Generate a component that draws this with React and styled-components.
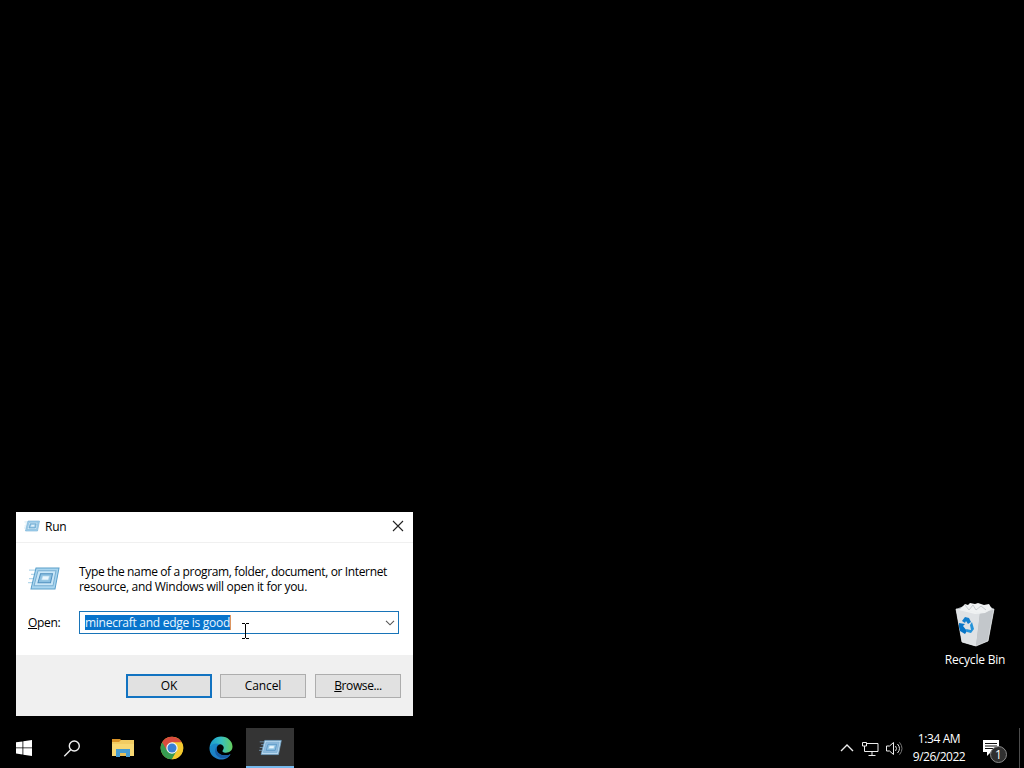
import React from "react";
import styled, { createGlobalStyle } from "styled-components";

const Global = createGlobalStyle`
  * { box-sizing: border-box; }
  body { margin: 0; background: #000; overflow: hidden; }
`;

const Desktop = styled.main`
  position: relative;
  width: 1024px;
  height: 768px;
  display: flex;
  flex-direction: column;
  justify-content: flex-end;
  background: #000;
  font-family: "Open Sans", "Noto Sans", sans-serif;
  font-size: 12px;
  line-height: 15px;
  color: #000;
  cursor: default;
  svg { display: block; flex: none; }
`;

const Label = styled.span`
  display: block;
  white-space: pre;
  letter-spacing: ${(p) => p.$spacing || 0}px;
`;

const Shortcut = styled.div`
  position: absolute;
  left: 937px;
  top: 600px;
  width: 76px;
  display: flex;
  flex-direction: column;
  align-items: center;
  gap: 4px;
  color: #fff;
`;

const Dialog = styled.section`
  position: absolute;
  left: 16px;
  top: 512px;
  width: 397px;
  height: 204px;
  display: flex;
  flex-direction: column;
  background: #fff;
`;

const TitleBar = styled.header`
  height: 31px;
  padding: 0 9px 2px 8px;
  display: flex;
  align-items: center;
  gap: 5px;
  border-bottom: 1px solid #f0f0f0;
`;

const CloseButton = styled.button`
  margin-left: auto;
  padding: 0;
  border: 0;
  background: none;
`;

const Body = styled.div`
  height: 112px;
  padding: 21px 14px 0 12px;
  display: flex;
  flex-direction: column;
  gap: 17px;
`;

const Message = styled.div`
  display: flex;
  align-items: flex-start;
  gap: 18px;
  height: 30px;
`;

const MessageIcon = styled.div`
  width: 33px;
  padding-top: 2px;
`;

const Field = styled.div`
  display: flex;
  align-items: center;
  height: 23px;
`;

const FieldName = styled.label`
  width: 51px;
  letter-spacing: -0.3px;
`;

const Combo = styled.div`
  flex: 1;
  height: 23px;
  padding: 0 3px 0 5px;
  display: flex;
  align-items: center;
  justify-content: space-between;
  border: 1px solid #1874b8;
`;

const Selection = styled.span`
  height: 15px;
  display: block;
  color: #e8f6ff;
  background: #0874cc;
  border-right: 1px solid #dc9560;
  letter-spacing: ${(p) => p.$spacing}px;
  white-space: pre;
`;

const Footer = styled.footer`
  height: 61px;
  padding: 19px 12px 18px;
  display: flex;
  justify-content: flex-end;
  background: #f0f0f0;
`;

const Button = styled.button`
  width: 86px;
  height: 24px;
  margin-left: ${(p) => p.$gap || 0}px;
  padding: 0 0 1px;
  display: flex;
  align-items: center;
  justify-content: center;
  font: inherit;
  letter-spacing: ${(p) => p.$spacing || 0}px;
  color: #000;
  background: #e1e1e1;
  border: ${(p) => (p.$primary ? "2px solid #1273c1" : "1px solid #adadad")};
`;

const Pointer = styled.div`
  position: absolute;
  left: 241px;
  top: 623px;
`;

const Taskbar = styled.nav`
  height: 40px;
  display: flex;
  justify-content: space-between;
  background: #000;
`;

const Group = styled.div`
  display: flex;
  align-items: center;
`;

const Task = styled.button`
  width: ${(p) => p.$width || 49}px;
  height: 40px;
  padding: 0 0 0 ${(p) => p.$inset || 0}px;
  display: flex;
  align-items: center;
  justify-content: center;
  border: 0;
  border-bottom: ${(p) => (p.$active ? "2px solid #76b9ed" : "0")};
  background: ${(p) => (p.$active ? "#343434" : "none")};
`;

const Tray = styled(Group)`
  gap: 7px;
  color: #fff;
`;

const Clock = styled.div`
  width: 54px;
  margin-left: 2px;
  display: flex;
  flex-direction: column;
  align-items: center;
  line-height: 18px;
  padding-bottom: 1px;
`;

const Notice = styled.div`
  position: relative;
  width: 34px;
  height: 40px;
  padding: 12px 0 0 10px;
`;

const Badge = styled.span`
  position: absolute;
  left: 17px;
  top: 18px;
  width: 17px;
  height: 17px;
  border: 1px solid #8a8a8a;
  border-radius: 50%;
  background: #303030;
  font-size: 12px;
  line-height: 15px;
  text-align: center;
`;

const ShowDesktop = styled.div`
  width: 5px;
  height: 40px;
  margin-left: 5px;
  border-left: 1px solid #4d4d4d;
`;

function RunIcon({ width, height, dark }) {
  return (
    <svg width={width} height={height} viewBox="0 0 32 24" preserveAspectRatio="none">
      <path d="M1 4h8M3 8h5M1 12h6M0 16h5M3 20h2" stroke={dark ? "#7295b0" : "#b4d8eb"} strokeWidth="1.2" />
      <path d="M8 2h23l-4 20H3z" fill={dark ? "#b9d8ef" : "#a9d5ef"} stroke={dark ? "#6fa3c8" : "#5a9fca"} />
      <path d="M10 4.5h18L25 19H6z" fill={dark ? "#8fb9dc" : "#c9e6f7"} stroke="#78afd2" />
      <path d="M12.5 7.5h12l-2 8.5H10z" fill="#8dc1e2" stroke="#4f90bf" />
      <path d="M14.5 9.5h7l-1 4h-7z" fill="#e9f6fd" stroke="#a0cce7" strokeWidth=".7" />
    </svg>
  );
}

function BinIcon() {
  return (
    <svg width="40" height="48" viewBox="0 0 40 48">
      <path d="M1 9l8-3 23-1 7 4-6 32-13 5-13-4z" fill="#b5bbc0" />
      <path d="M1 9l24 4-4 33-14-4z" fill="#dfe2e5" />
      <path d="M25 13l14-4-6 32-12 5z" fill="#c3c7cb" />
      <path d="M4 10l6-6 3 1 2-2 5 1 3-1 6 2 5-1 3 5-7 4-10 1z" fill="#f0f2f3" />
      <path d="M10 5l4 5 4-5 3 5 5-4 5 4" fill="none" stroke="#bcc2c6" strokeWidth=".8" />
      <path d="M1 9l24 4 14-4M1 9l6 33 14 4 12-5 6-32" fill="none" stroke="#eceff1" strokeWidth=".7" />
      <path d="M7 21l3-4 4 1 2 4-3 2-2-3-1 2z" fill="#147fce" />
      <path d="M17 22l2 7-3 4-4-1-1-3 5 1-1-5z" fill="#2393da" />
      <path d="M4 23l6 1-2 2 4 5-2 3-5-3-1-4z" fill="#0875c7" />
    </svg>
  );
}

function ChromeIcon() {
  return (
    <svg width="24" height="24" viewBox="0 0 24 24">
      <circle cx="12" cy="12" r="11.3" fill="#f3c631" />
      <path d="M12 12L2.2 6.35A11.3 11.3 0 0 0 12 23.3l4.7-8.2z" fill="#369b50" />
      <path d="M2.2 6.35A11.3 11.3 0 0 1 21.8 6.6H12v10L7.2 14.7z" fill="#d94b3d" />
      <path d="M12 6.6h9.8A11.3 11.3 0 0 1 12 23.3l4.8-8.2z" fill="#f4c92f" />
      <circle cx="12" cy="12" r="5.7" fill="#f5f6f6" />
      <circle cx="12" cy="12" r="4.5" fill="#397fd4" />
    </svg>
  );
}

function EdgeIcon() {
  return (
    <svg width="24" height="24" viewBox="0 0 24 24">
      <defs>
        <linearGradient id="edge-top"><stop stopColor="#1999d1" /><stop offset=".5" stopColor="#36bfc1" /><stop offset="1" stopColor="#65ce5d" /></linearGradient>
        <linearGradient id="edge-base" x2="1" y2="1"><stop stopColor="#178cc7" /><stop offset="1" stopColor="#2474c4" /></linearGradient>
      </defs>
      <path d="M.5 12C1 5 6 .5 12 .5c7 0 11.5 5 11.5 10 0 4-3 6.2-6.5 6.2-3 0-4.3-1.1-3-2.7 1.7-2.2.5-5.2-3-5.7C7 7.7 2.6 9 .5 12z" fill="url(#edge-top)" />
      <path d="M.5 12C2.4 7.5 7 6.7 11 8.3 8.4 9 7.3 11.2 7.8 14c.7 4.4 7.2 7 13.7 4.2-2.2 4.2-7.4 6.4-12.1 5C3.8 21.8.2 17.3.5 12z" fill="url(#edge-base)" />
      <path d="M11 8.3C8 9.3 7 12 7.8 14.4c1.2 4 7.5 6.8 13.7 3.8-3 4-9 5.4-13 2C4.6 17 5.7 10 11 8.3z" fill="#185ca4" />
    </svg>
  );
}

export default function App() {
  return (
    <>
      <Global />
      <Desktop>
        <Shortcut>
          <BinIcon />
          <Label $spacing={-0.2}>Recycle Bin</Label>
        </Shortcut>

        <Dialog>
          <TitleBar>
            <RunIcon width={16} height={12} />
            <Label $spacing={-0.2}>Run</Label>
            <CloseButton aria-label="Close">
              <svg width="12" height="12" viewBox="0 0 12 12"><path d="M1 1l10 10M11 1L1 11" stroke="#222" strokeWidth="1.1" /></svg>
            </CloseButton>
          </TitleBar>
          <Body>
            <Message>
              <MessageIcon><RunIcon width={32} height={25} /></MessageIcon>
              <div>
                <Label $spacing={-0.36}>Type the name of a program, folder, document, or Internet</Label>
                <Label $spacing={-0.3}>resource, and Windows will open it for you.</Label>
              </div>
            </Message>
            <Field>
              <FieldName><u>O</u>pen:</FieldName>
              <Combo>
                <Selection $spacing={-0.27}>minecraft and edge is good</Selection>
                <svg width="10" height="6" viewBox="0 0 10 6"><path d="M1 .8l4 4 4-4" fill="none" stroke="#555" strokeWidth="1.1" /></svg>
              </Combo>
            </Field>
          </Body>
          <Footer>
            <Button $primary $spacing={-0.2}>OK</Button>
            <Button $gap={8} $spacing={-0.1}>Cancel</Button>
            <Button $gap={9} $spacing={-0.4}><u>B</u>rowse...</Button>
          </Footer>
        </Dialog>

        <Pointer>
          <svg width="9" height="16" viewBox="0 0 9 16"><path d="M1 .5h3M5 .5h3M4.5 1v14M1 15.5h3M5 15.5h3" stroke="#000" /></svg>
        </Pointer>

        <Taskbar>
          <Group>
            <Task $width={48} aria-label="Start">
              <svg width="16" height="16" viewBox="0 0 16 16"><path d="M0 2.3l6.5-.9v6.1H0zM7.3 1.3L16 0v7.5H7.3zM0 8.3h6.5v6.2L0 13.6zM7.3 8.3H16V16l-8.7-1.3z" fill="#fff" /></svg>
            </Task>
            <Task $width={48} aria-label="Search">
              <svg width="18" height="17" viewBox="0 0 18 17"><circle cx="11.3" cy="6" r="5" fill="none" stroke="#eee" strokeWidth="1.4" /><path d="M7.7 9.8L1.3 16.2" stroke="#eee" strokeWidth="1.4" /></svg>
            </Task>
            <Task $width={54} aria-label="File Explorer">
              <svg width="22" height="18" viewBox="0 0 22 18">
                <path d="M0 0h8l2 2v2H0z" fill="#d99327" />
                <path d="M8 2l1-1h13v16H0V3h7z" fill="#f2cc62" />
                <path d="M0 5h22v12H0z" fill="#f8d873" />
                <path d="M4 18v-8h14v8h-4v-4H8v4z" fill="#459bd1" />
                <path d="M8 14h6v3H8z" fill="#e5bf59" />
              </svg>
            </Task>
            <Task $width={44} aria-label="Chrome"><ChromeIcon /></Task>
            <Task $width={52} $inset={2} aria-label="Edge"><EdgeIcon /></Task>
            <Task $width={48} $active aria-label="Run"><RunIcon width={23} height={17} dark /></Task>
          </Group>
          <Tray>
            <svg width="15" height="8" viewBox="0 0 15 8"><path d="M1 7l6-6 6 6" fill="none" stroke="#eee" strokeWidth="1.4" /></svg>
            <svg width="17" height="15" viewBox="0 0 17 15">
              <path d="M5 2.5h11v8H4.5M2.5 5v5.5H6M10 11v3M6.5 14.5h7" fill="none" stroke="#eee" />
              <path d="M.5 1.5h4V5h-4z" fill="#000" stroke="#eee" />
            </svg>
            <svg width="17" height="15" viewBox="0 0 17 15">
              <path d="M.5 5h3l4-3.5v12l-4-3.5h-3z" fill="none" stroke="#eee" />
              <path d="M9.5 5q2 2.5 0 5M11.5 3q4 4.5 0 9" fill="none" stroke="#ddd" />
              <path d="M13.5 1.3q5 6.2 0 12.4" fill="none" stroke="#777" />
            </svg>
            <Clock>
              <Label $spacing={-0.4}>1:34 AM</Label>
              <Label $spacing={-0.5}>9/26/2022</Label>
            </Clock>
            <Notice>
              <svg width="16" height="16" viewBox="0 0 16 16"><path d="M0 0h16v12H8l-4 4v-4H0z" fill="#fff" /><path d="M2 3.5h12M2 6h12M2 8.5h8" stroke="#111" /></svg>
              <Badge>1</Badge>
            </Notice>
            <ShowDesktop />
          </Tray>
        </Taskbar>
      </Desktop>
    </>
  );
}
